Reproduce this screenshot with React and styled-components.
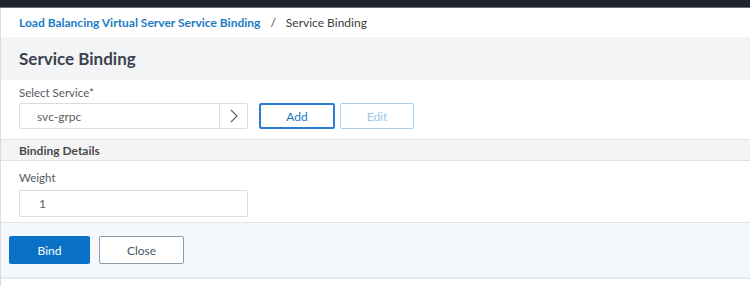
import React from 'react'
import styled, { createGlobalStyle } from 'styled-components'

const GlobalStyle = createGlobalStyle`
    html, body {
        margin: 0;
        padding: 0;
        background: #ffffff;
        font-family: "Lato", "Open Sans", "Liberation Sans", sans-serif;
    }
`

const Page = styled.div`
    width: 750px;
    height: 286px;
    overflow: hidden;
    display: flex;
    flex-direction: column;
`

const TopBar = styled.div`
    height: 7px;
    flex-shrink: 0;
    background: #1f232b;
    border-bottom: 1px solid #6b7078;
`

const Frame = styled.div`
    flex: 1;
    display: flex;
    flex-direction: column;
    border-left: 1px solid #dcdcdc;
`

const Breadcrumb = styled.div`
    height: 29px;
    flex-shrink: 0;
    display: flex;
    align-items: center;
    padding-left: 18px;
    font-size: 12px;
    color: #3d3d3d;
`

const CrumbLink = styled.a`
    color: #1b7bc4;
    font-weight: 700;
    text-decoration: none;
    cursor: pointer;
`

const CrumbSep = styled.span`
    margin: 0 10px;
`

const TitleBar = styled.div`
    height: 43px;
    flex-shrink: 0;
    display: flex;
    align-items: center;
    padding-left: 18px;
    background: #f3f4f6;
    font-size: 17px;
    font-weight: 700;
    color: #3b424e;
`

const Section = styled.div`
    padding: ${(p) => p.top}px 18px ${(p) => p.bottom || 0}px;
    display: flex;
    flex-direction: column;
`

const Label = styled.div`
    font-size: 11.5px;
    color: #555a60;
    height: 16px;
    line-height: 16px;
    margin-bottom: ${(p) => p.space}px;
`

const Row = styled.div`
    display: flex;
    align-items: center;
    gap: 5px;
`

const InputBox = styled.div`
    width: ${(p) => p.width}px;
    height: ${(p) => p.height}px;
    box-sizing: border-box;
    border: 1px solid #dcdcdc;
    border-radius: 2px;
    display: flex;
    align-items: center;
    font-size: 12px;
    color: #5a5f66;
    margin-right: ${(p) => p.gap || 0}px;
`

const InputText = styled.div`
    flex: 1;
    padding-left: ${(p) => p.indent}px;
`

const ArrowCell = styled.div`
    width: 27px;
    height: 100%;
    border-left: 1px solid #dcdcdc;
    display: flex;
    align-items: center;
    justify-content: center;
`

const OutlineButton = styled.button`
    width: ${(p) => p.width}px;
    height: 26px;
    box-sizing: border-box;
    background: #ffffff;
    border: ${(p) => (p.disabled ? '1px solid #a8cdef' : '2px solid #2a7cd0')};
    border-radius: 2px;
    font-family: inherit;
    font-size: 12px;
    color: ${(p) => (p.disabled ? '#9cc5ea' : '#1f74c4')};
    padding: 0;
`

const SectionHeader = styled.div`
    margin-top: 10px;
    height: 20px;
    flex-shrink: 0;
    display: flex;
    align-items: center;
    padding-left: 18px;
    background: #f4f4f4;
    border-top: 1px solid #e2e2e2;
    border-bottom: 1px solid #e2e2e2;
    font-size: 12px;
    font-weight: 700;
    color: #474b50;
`

const Footer = styled.div`
    height: 54px;
    flex-shrink: 0;
    display: flex;
    align-items: center;
    gap: 9px;
    padding-left: 8px;
    background: #f4f7fb;
    border-top: 1px solid #e2e4ea;
    border-bottom: 2px solid #e6e9ee;
`

const PrimaryButton = styled.button`
    width: 81px;
    height: 28px;
    background: #0a72c6;
    border: none;
    border-radius: 2px;
    color: #ffffff;
    font-family: inherit;
    font-size: 12px;
`

const SecondaryButton = styled.button`
    width: 85px;
    height: 28px;
    box-sizing: border-box;
    background: #ffffff;
    border: 1px solid #8d9bab;
    border-radius: 2px;
    color: #4a5868;
    font-family: inherit;
    font-size: 12px;
`

function Chevron() {
    return (
        <svg width="8" height="14" viewBox="0 0 8 14">
            <polyline points="1,1 7,7 1,13" fill="none" stroke="#555" strokeWidth="1.1" />
        </svg>
    )
}

export default function App() {
    return (
        <Page>
            <GlobalStyle />
            <TopBar />
            <Frame>
                <Breadcrumb>
                    <CrumbLink>Load Balancing Virtual Server Service Binding</CrumbLink>
                    <CrumbSep>/</CrumbSep>
                    <span>Service Binding</span>
                </Breadcrumb>
                <TitleBar>Service Binding</TitleBar>
                <Section top={5}>
                    <Label space={2}>Select Service*</Label>
                    <Row>
                        <InputBox width={229} height={26} gap={6}>
                            <InputText indent={17}>svc-grpc</InputText>
                            <ArrowCell>
                                <Chevron />
                            </ArrowCell>
                        </InputBox>
                        <OutlineButton width={76}>Add</OutlineButton>
                        <OutlineButton width={74} disabled>Edit</OutlineButton>
                    </Row>
                </Section>
                <SectionHeader>Binding Details</SectionHeader>
                <Section top={9} bottom={5}>
                    <Label space={4}>Weight</Label>
                    <Row>
                        <InputBox width={229} height={27}>
                            <InputText indent={19}>1</InputText>
                        </InputBox>
                    </Row>
                </Section>
                <Footer>
                    <PrimaryButton>Bind</PrimaryButton>
                    <SecondaryButton>Close</SecondaryButton>
                </Footer>
            </Frame>
        </Page>
    )
}
